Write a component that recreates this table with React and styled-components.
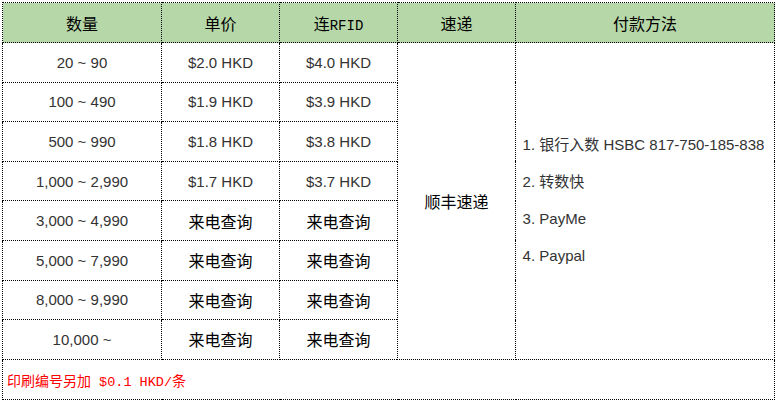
import styled, { createGlobalStyle } from "styled-components";

const GlobalStyle = createGlobalStyle`
  body {
    margin: 0;
    background: #fff;
  }
`;

const rows = [
  { qty: "20 ~ 90", price: "$2.0 HKD", rfid: "$4.0 HKD" },
  { qty: "100 ~ 490", price: "$1.9 HKD", rfid: "$3.9 HKD" },
  { qty: "500 ~ 990", price: "$1.8 HKD", rfid: "$3.8 HKD" },
  { qty: "1,000 ~ 2,990", price: "$1.7 HKD", rfid: "$3.7 HKD" },
  { qty: "3,000 ~ 4,990" },
  { qty: "5,000 ~ 7,990" },
  { qty: "8,000 ~ 9,990" },
  { qty: "10,000 ~" },
];

const payments = [
  "1. 银行入数 HSBC 817-750-185-838",
  "2. 转数快",
  "3. PayMe",
  "4. Paypal",
];

const App = () => {
  return (
    <Page>
      <GlobalStyle />
      <Table>
        <colgroup>
          <col style={{ width: 159 }} />
          <col style={{ width: 118 }} />
          <col style={{ width: 118 }} />
          <col style={{ width: 118 }} />
          <col style={{ width: 259 }} />
        </colgroup>
        <thead>
          <tr>
            <Th>数量</Th>
            <Th>单价</Th>
            <Th>
              连<Mono>RFID</Mono>
            </Th>
            <Th>速递</Th>
            <Th>付款方法</Th>
          </tr>
        </thead>
        <tbody>
          {rows.map((row, i) => (
            <Row key={row.qty}>
              <Td>{row.qty}</Td>
              <Td $cjk={!row.price}>{row.price || "来电查询"}</Td>
              <Td $cjk={!row.rfid}>{row.rfid || "来电查询"}</Td>
              {i === 0 && (
                <>
                  <Td rowSpan={rows.length} $cjk>
                    顺丰速递
                  </Td>
                  <Td rowSpan={rows.length}>
                    <PayList>
                      {payments.map((p) => (
                        <li key={p}>{p}</li>
                      ))}
                    </PayList>
                  </Td>
                </>
              )}
            </Row>
          ))}
          <FootRow>
            <Note colSpan={5}>
              印刷编号另加<NoteMono> $0.1 HKD/</NoteMono>条
            </Note>
          </FootRow>
        </tbody>
      </Table>
    </Page>
  );
};

const Page = styled.div`
  padding: 2px 0 0 2px;
`;

const Table = styled.table`
  border-collapse: collapse;
  table-layout: fixed;
  width: 772px;
  border: 1px dotted #000;

  thead tr {
    height: 40px;
  }
`;

const Th = styled.th`
  background: #b6d7a8;
  border: 1px dotted #000;
  padding: 0;
  font-weight: normal;
  font-size: 16px;
  color: #000;
  font-family: "Noto Sans CJK SC", sans-serif;
  text-align: center;
  vertical-align: middle;
`;

const Mono = styled.span`
  font-family: "Liberation Mono", monospace;
  font-size: 14px;
`;

const Row = styled.tr`
  height: 39.6px;
`;

const Td = styled.td`
  border: 1px dotted #000;
  padding: 0;
  text-align: center;
  vertical-align: middle;
  font-family: ${({ $cjk }) =>
    $cjk ? `"Noto Sans CJK SC", sans-serif` : `"Liberation Sans", "Noto Sans CJK SC", sans-serif`};
  font-size: ${({ $cjk }) => ($cjk ? "16px" : "15px")};
  color: ${({ $cjk }) => ($cjk ? "#000" : "#333")};
`;

const PayList = styled.ul`
  display: inline-flex;
  flex-direction: column;
  align-items: flex-start;
  margin: 0 0 0 -3px;
  padding: 0;
  list-style: none;
  text-align: left;
  line-height: 36.7px;
  color: #333;
  font-size: 15px;
`;

const FootRow = styled.tr`
  height: 40px;
`;

const Note = styled.td`
  border: 1px dotted #000;
  padding: 2px 0 0 4px;
  text-align: left;
  vertical-align: middle;
  color: #f00;
  font-size: 14px;
  font-family: "Noto Sans CJK SC", sans-serif;
`;

const NoteMono = styled.span`
  font-family: "Liberation Mono", monospace;
  font-size: 13.5px;
  white-space: pre;
`;

export default App;
